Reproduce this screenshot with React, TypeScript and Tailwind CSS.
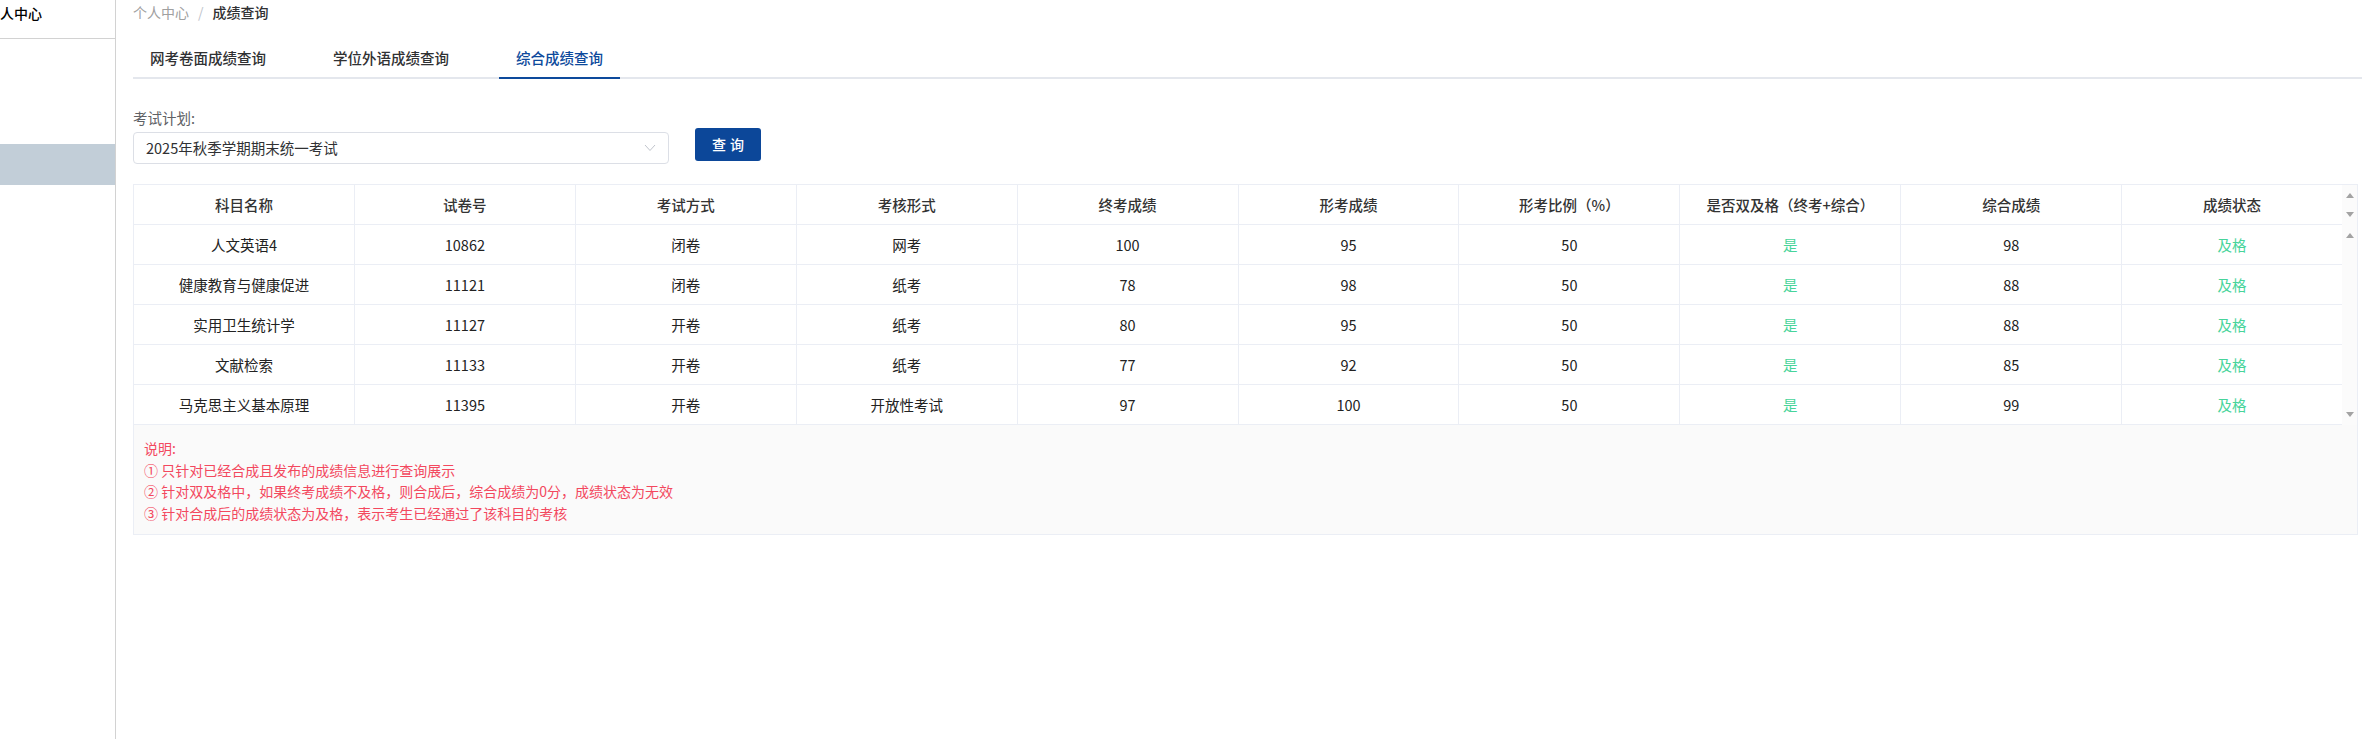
import React from 'react';

const HEADERS = [
  '科目名称',
  '试卷号',
  '考试方式',
  '考核形式',
  '终考成绩',
  '形考成绩',
  '形考比例（%）',
  '是否双及格（终考+综合）',
  '综合成绩',
  '成绩状态',
];

const ROWS = [
  ['人文英语4', '10862', '闭卷', '网考', '100', '95', '50', '是', '98', '及格'],
  ['健康教育与健康促进', '11121', '闭卷', '纸考', '78', '98', '50', '是', '88', '及格'],
  ['实用卫生统计学', '11127', '开卷', '纸考', '80', '95', '50', '是', '88', '及格'],
  ['文献检索', '11133', '开卷', '纸考', '77', '92', '50', '是', '85', '及格'],
  ['马克思主义基本原理', '11395', '开卷', '开放性考试', '97', '100', '50', '是', '99', '及格'],
];

const NOTES = [
  '说明:',
  '① 只针对已经合成且发布的成绩信息进行查询展示',
  '② 针对双及格中，如果终考成绩不及格，则合成后，综合成绩为0分，成绩状态为无效',
  '③ 针对合成后的成绩状态为及格，表示考生已经通过了该科目的考核',
];

const TABS = ['网考卷面成绩查询', '学位外语成绩查询', '综合成绩查询'];

function ArrowUp() {
  return (
    <svg width="8" height="5" viewBox="0 0 8 5">
      <path d="M0 5 L4 0 L8 5 Z" fill="#a3a3a3" />
    </svg>
  );
}

function ArrowDown() {
  return (
    <svg width="8" height="5" viewBox="0 0 8 5">
      <path d="M0 0 L4 5 L8 0 Z" fill="#a3a3a3" />
    </svg>
  );
}

export default function App() {
  const active = 2;

  return (
    <div className="flex min-h-[739px] w-[2362px] bg-white font-['Noto_Sans_CJK_SC','Noto_Sans',sans-serif] text-[14.5px] text-[#303133]">
      {/* Sidebar, the menu is scrolled so the first title is clipped on the left */}
      <aside className="w-[116px] shrink-0 overflow-hidden border-r border-[#d2d2d2]">
        <div className="flex h-[39px] items-start border-b border-[#d2d2d2] pt-[3px]">
          <span className="-ml-[14px] whitespace-nowrap text-[14px] font-medium leading-[20px] text-black">个人中心</span>
        </div>
        <div className="h-[105px]" />
        <div className="h-[41px] bg-[#c2ced8]" />
      </aside>

      {/* Main */}
      <main className="flex-1 pl-[17px]">
        {/* Breadcrumb */}
        <div className="flex h-[24px] items-center text-[14px]">
          <span className="text-[#a0a0a0]">个人中心</span>
          <span className="mx-[9px] text-[#c0c4cc]">/</span>
          <span className="font-medium text-[#303133]">成绩查询</span>
        </div>

        {/* Tabs */}
        <div className="mt-[15px] flex h-[40px] gap-[33px] border-b-2 border-[#e4e7ed]">
          {TABS.map((t, i) => (
            <div
              key={t}
              className={`relative flex items-center px-[17px] font-medium ${i === active ? 'text-[#0d4a9c]' : 'text-[#303133]'}`}
            >
              {t}
              {i === active && <span className="absolute bottom-[-2px] left-0 right-0 h-[2px] bg-[#0d4a9c]" />}
            </div>
          ))}
        </div>

        {/* Filter */}
        <div className="mt-[29px] flex items-start">
          <div className="flex flex-col">
            <div className="leading-[20px] text-[#606266]">考试计划:</div>
            <div className="mt-[4px] flex h-[32px] w-[536px] items-center justify-between rounded-[4px] border border-[#dcdfe6] pl-[12px] pr-[12px]">
              <span className="text-[#303133]">2025年秋季学期期末统一考试</span>
              <svg width="12" height="8" viewBox="0 0 12 8" fill="none">
                <path d="M1 1 L6 6.5 L11 1" stroke="#c0c4cc" strokeWidth="1" />
              </svg>
            </div>
          </div>
          <button className="ml-[26px] mt-[20px] flex h-[33px] w-[66px] items-center justify-center rounded-[3px] bg-[#0c4799] text-[14px] font-medium tracking-[4px] text-white">
            <span className="pl-[4px]">查询</span>
          </button>
        </div>

        {/* Table */}
        <div className="mt-[20px] w-[2225px] border border-[#ebeef5]">
          <div className="flex">
            <div className="flex-1">
              <div className="flex h-[40px] border-b border-[#ebeef5]">
                {HEADERS.map((h, i) => (
                  <div
                    key={h}
                    className={`flex flex-1 basis-0 items-center justify-center font-medium text-[#333] ${i < 9 ? 'border-r border-[#ebeef5]' : ''}`}
                  >
                    {h}
                  </div>
                ))}
              </div>
              {ROWS.map((r, ri) => (
                <div key={ri} className="flex h-[40px] border-b border-[#ebeef5]">
                  {r.map((c, ci) => (
                    <div
                      key={ci}
                      className={`flex flex-1 basis-0 items-center justify-center ${ci === 7 || ci === 9 ? 'text-[#47d49a]' : 'text-[#222]'} ${ci < 9 ? 'border-r border-[#ebeef5]' : ''}`}
                    >
                      {c}
                    </div>
                  ))}
                </div>
              ))}
            </div>
            {/* Scroll gutter */}
            <div className="flex w-[15px] flex-col bg-[#fbfbfb]">
              <div className="flex h-[40px] flex-col items-center justify-between py-[8px]">
                <ArrowUp />
                <ArrowDown />
              </div>
              <div className="flex flex-1 flex-col items-center justify-between pb-[8px] pt-[8px]">
                <ArrowUp />
                <ArrowDown />
              </div>
            </div>
          </div>

          {/* Notes */}
          <div className="h-[109px] bg-[#fafafa] px-[10px] pt-[13px] text-[14px] leading-[21.5px] text-[#f3485e]">
            {NOTES.map((n) => (
              <div key={n}>{n}</div>
            ))}
          </div>
        </div>
      </main>
    </div>
  );
}
